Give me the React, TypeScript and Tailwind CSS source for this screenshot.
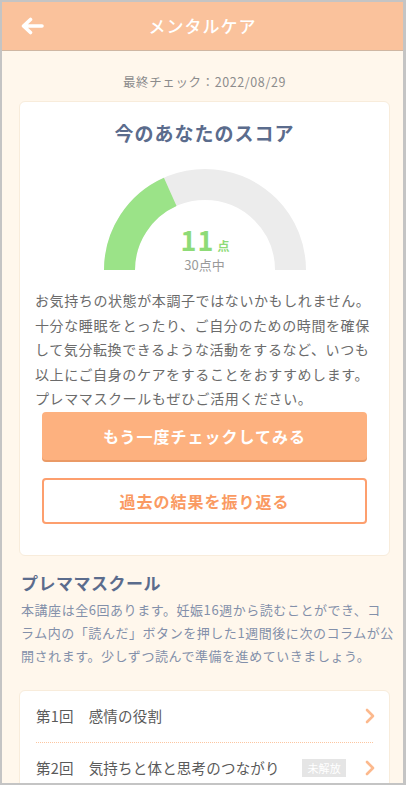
import React from "react";

const font = { fontFamily: '"Noto Sans CJK JP", "Noto Sans", sans-serif' };

// thick white back arrow
const BackArrow = () => (
  <svg width="24" height="18" viewBox="0 0 24 18" fill="none">
    <path d="M22 9H4M10.5 2.5L3.5 9l7 6.5" stroke="#fff" strokeWidth="3.6" strokeLinecap="round" strokeLinejoin="round" />
  </svg>
);

const Chevron = () => (
  <svg width="10" height="16" viewBox="0 0 10 16" fill="none">
    <path d="M2 2l6 6-6 6" stroke="#fcb98d" strokeWidth="2.6" strokeLinecap="round" strokeLinejoin="round" />
  </svg>
);

// semicircle score gauge, 11 / 30
function Gauge({ score, max }: { score: number; max: number }) {
  const cx = 102;
  const cy = 101;
  const r = 85.5;
  const a = Math.PI - (score / max) * Math.PI;
  const ex = cx + r * Math.cos(a);
  const ey = cy - r * Math.sin(a);
  return (
    <div className="relative w-[204px] h-[101px]">
      <svg width="204" height="101" viewBox="0 0 204 101">
        <path d={`M ${cx - r} ${cy} A ${r} ${r} 0 0 1 ${cx + r} ${cy}`} stroke="#ececec" strokeWidth="31" fill="none" />
        <path d={`M ${cx - r} ${cy} A ${r} ${r} 0 0 1 ${ex} ${ey}`} stroke="#9be388" strokeWidth="31" fill="none" />
      </svg>
      <div className="absolute left-0 right-0 bottom-[-3px] flex flex-col items-center">
        <div className="flex items-end pl-[1px]">
          <span className="text-[27px] leading-[26px] font-bold text-[#8edb77] tracking-[1px]">11</span>
          <span className="text-[12px] leading-[14px] font-bold text-[#8edb77] ml-[3px]">点</span>
        </div>
        <span className="mt-[3px] text-[13px] leading-[17px] text-[#9a9a9a]">30点中</span>
      </div>
    </div>
  );
}

export default function App() {
  return (
    <div style={font} className="w-[406px] h-[785px] border-2 border-r-[3px] border-[#c4c4c4] bg-[#fff7ec] overflow-hidden flex flex-col">
      {/* header */}
      <div className="h-[49px] shrink-0 bg-[#fac29c] border-b border-[#cfb7a3] flex items-center relative">
        <div className="absolute left-[18px] top-[15px]">
          <BackArrow />
        </div>
        <h1 className="flex-1 text-center text-white text-[17px] font-medium tracking-[1px]">メンタルケア</h1>
      </div>

      <div className="flex flex-col pl-[17px] pr-[13px]">
        <p className="pt-[22px] h-[50px] text-center text-[12.5px] leading-[18px] text-[#8c8c8c] tracking-[0.6px]">
          最終チェック：2022/08/29
        </p>

        {/* score card */}
        <div className="bg-white rounded-[6px] border border-[#f8ecdb] px-[15px] pt-[17px] pb-[31px] flex flex-col items-center">
          <h2 className="text-[19px] leading-[28px] font-bold text-[#5b6c8d] tracking-[1px]">今のあなたのスコア</h2>
          <div className="mt-[22px]">
            <Gauge score={11} max={30} />
          </div>
          <p className="mt-[18px] w-full text-[14px] leading-[24.5px] text-[#6b6b6b] tracking-[0.6px] whitespace-nowrap">
            お気持ちの状態が本調子ではないかもしれません。<br />
            十分な睡眠をとったり、ご自分のための時間を確保<br />
            して気分転換できるような活動をするなど、いつも<br />
            以上にご自身のケアをすることをおすすめします。<br />
            プレママスクールもぜひご活用ください。
          </p>
          <button className="mt-[1px] w-[325px] h-[48px] rounded-[4px] bg-[#fdb17f] shadow-[0_2px_0_#ea9a66] text-white text-[16px] font-bold tracking-[1px]">
            もう一度チェックしてみる
          </button>
          <button className="mt-[18px] w-[325px] h-[46px] rounded-[4px] bg-white border-2 border-[#fd9f6e] text-[#fa9a62] text-[16px] font-bold tracking-[1px]">
            過去の結果を振り返る
          </button>
        </div>

        {/* pre-mama school */}
        <h3 className="mt-[15px] pl-[2px] text-[17px] leading-[24px] font-bold text-[#5b6c8d] tracking-[0.5px]">プレママスクール</h3>
        <p className="mt-[3px] pl-[2px] text-[13px] leading-[23px] text-[#8390aa] tracking-[0.55px] whitespace-nowrap">
          本講座は全6回あります。妊娠16週から読むことができ、コ<br />
          ラム内の「読んだ」ボタンを押した1週間後に次のコラムが公<br />
          開されます。少しずつ読んで準備を進めていきましょう。
        </p>

        <div className="mt-[23px] bg-white rounded-[6px] border border-[#f8ecdb] px-[16px] flex flex-col">
          <div className="h-[51px] flex items-center text-[14.5px] text-[#5a5a5a] tracking-[0.2px]">
            <span>第1回</span>
            <span className="ml-[15px] flex-1">感情の役割</span>
            <span className="mr-[-2px]"><Chevron /></span>
          </div>
          <div className="border-t border-dotted border-[#fcc6a0]" />
          <div className="h-[51px] flex items-center text-[14.5px] text-[#5a5a5a] tracking-[0.2px]">
            <span>第2回</span>
            <span className="ml-[15px] flex-1">気持ちと体と思考のつながり</span>
            <span className="mr-[19px] bg-[#e5e5e5] text-white text-[11px] leading-[18px] px-[5px]">未解放</span>
            <span className="mr-[-2px]"><Chevron /></span>
          </div>
        </div>
      </div>
    </div>
  );
}
